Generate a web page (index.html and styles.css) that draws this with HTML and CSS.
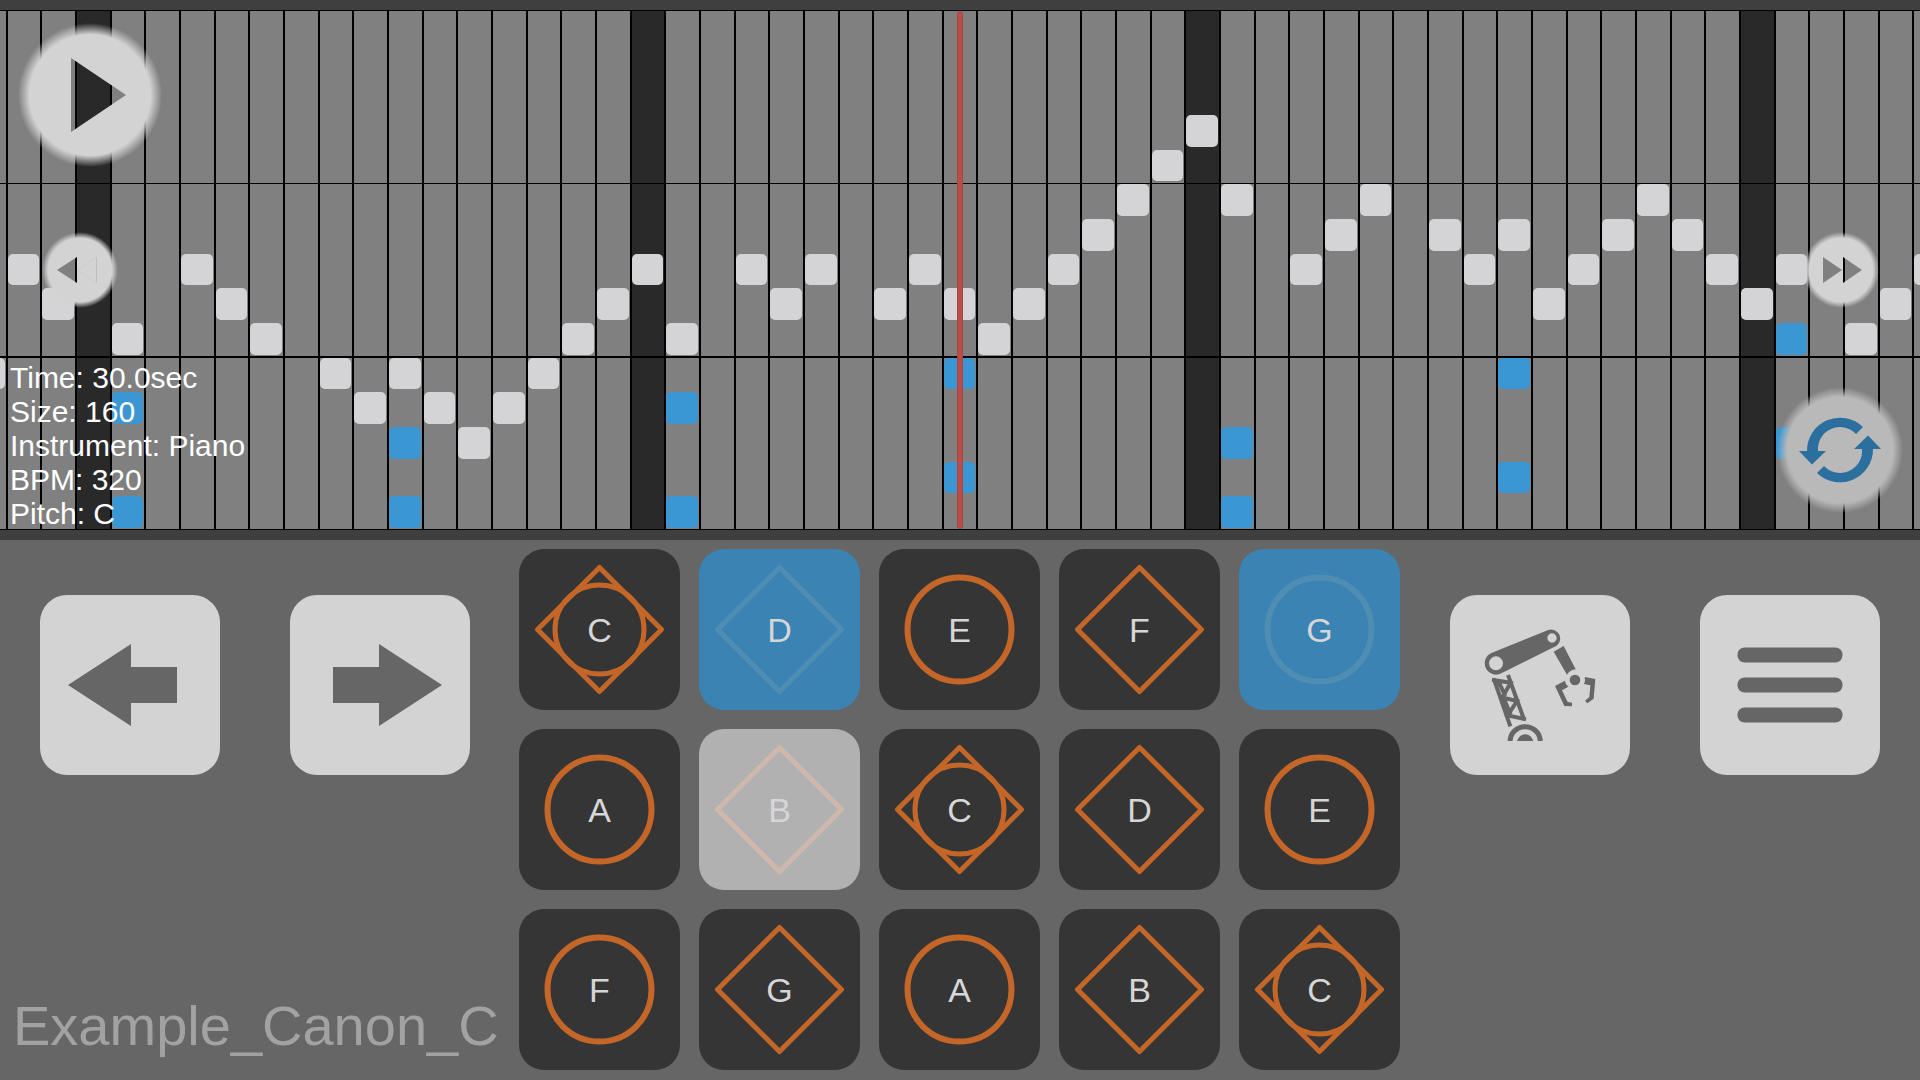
FILE: index.html
```html
<!DOCTYPE html>
<html lang="en">
<head>
<meta charset="utf-8">
<meta name="viewport" content="width=device-width, initial-scale=1">
<title>Example_Canon_C</title>
<link rel="stylesheet" href="styles.css">
</head>
<body>
<svg class="defs" aria-hidden="true">
  <defs>
    <radialGradient id="soft-light">
      <stop offset="0.84" stop-color="#d3d3d3"/>
      <stop offset="1" stop-color="#d3d3d3" stop-opacity="0"/>
    </radialGradient>
    <radialGradient id="soft-gray">
      <stop offset="0.84" stop-color="#b9b9b9"/>
      <stop offset="1" stop-color="#b9b9b9" stop-opacity="0"/>
    </radialGradient>
    <symbol id="circle" viewBox="0 0 161 161"><circle cx="80.5" cy="80.5" r="52" stroke-width="6"/></symbol>
    <symbol id="diamond" viewBox="0 0 161 161"><path d="M80.5 18.5L142.5 80.5 80.5 142.5 18.5 80.5Z"/></symbol>
    <symbol id="both" viewBox="0 0 161 161"><path d="M80.5 18.5L142.5 80.5 80.5 142.5 18.5 80.5Z"/><circle cx="80.5" cy="80.5" r="44.5"/></symbol>
  </defs>
</svg>

<section class="roll" aria-label="Score">
  <div class="roll-grid" id="roll-grid"></div>
  <div class="playhead"></div>
  <ul class="info">
    <li>Time: 30.0sec</li>
    <li>Size: 160</li>
    <li>Instrument: Piano</li>
    <li>BPM: 320</li>
    <li>Pitch: C</li>
  </ul>
  <button class="round play" type="button" aria-label="Play">
    <svg viewBox="0 0 144 144"><path fill="url(#soft-light)" fill-rule="evenodd" d="M0 72A72 72 0 0 1 144 72A72 72 0 0 1 0 72ZM53 35V109L108 72Z"/></svg>
  </button>
  <button class="round rewind" type="button" aria-label="Rewind">
    <svg viewBox="0 0 76 76"><path fill="url(#soft-light)" fill-rule="evenodd" d="M0 38A38 38 0 0 1 76 38A38 38 0 0 1 0 38ZM15 38L35 25V51Z"/><path fill="none" stroke="#cdcdcd" d="M36 38L54 25.5M36 38L54 51"/><path fill="none" stroke="#bebebe" d="M54.5 25V51"/></svg>
  </button>
  <button class="round forward" type="button" aria-label="Fast forward">
    <svg viewBox="0 0 76 76"><path fill="url(#soft-light)" fill-rule="evenodd" d="M0 38A38 38 0 0 1 76 38A38 38 0 0 1 0 38ZM20 25V51L39 38ZM40 25V51L59 38Z"/></svg>
  </button>
  <button class="round loop" type="button" aria-label="Loop">
    <svg viewBox="-63 -63 126 126"><circle r="63" fill="url(#soft-gray)"/><path fill="#2a6f9e" d="M-33 1A33 33 0 0 1 23 -23L16 -16A22 22 0 0 0 -22 1H-14L-28 14.5-41 1ZM33 -1A33 33 0 0 1 -23 23L-16 16A22 22 0 0 0 22 -1H14L28 -14.5 41 -1Z"/></svg>
  </button>
</section>

<main class="panel">
  <div class="side">
    <div class="tools">
      <button class="tool" type="button" aria-label="Step back"><svg viewBox="0 0 180 180"><path d="M28 90L91 49V72H137V108H91V131Z"/></svg></button>
      <button class="tool" type="button" aria-label="Step forward"><svg viewBox="0 0 180 180"><path d="M152 90L89 49V72H43V108H89V131Z"/></svg></button>
    </div>
    <h1 class="title">Example_Canon_C</h1>
  </div>

  <div class="pads">
    <button class="pad" type="button"><svg><use href="#both"/></svg><span>C</span></button>
    <button class="pad active" type="button"><svg><use href="#diamond"/></svg><span>D</span></button>
    <button class="pad" type="button"><svg><use href="#circle"/></svg><span>E</span></button>
    <button class="pad" type="button"><svg><use href="#diamond"/></svg><span>F</span></button>
    <button class="pad active" type="button"><svg><use href="#circle"/></svg><span>G</span></button>
    <button class="pad" type="button"><svg><use href="#circle"/></svg><span>A</span></button>
    <button class="pad lit" type="button"><svg><use href="#diamond"/></svg><span>B</span></button>
    <button class="pad" type="button"><svg><use href="#both"/></svg><span>C</span></button>
    <button class="pad" type="button"><svg><use href="#diamond"/></svg><span>D</span></button>
    <button class="pad" type="button"><svg><use href="#circle"/></svg><span>E</span></button>
    <button class="pad" type="button"><svg><use href="#circle"/></svg><span>F</span></button>
    <button class="pad" type="button"><svg><use href="#diamond"/></svg><span>G</span></button>
    <button class="pad" type="button"><svg><use href="#circle"/></svg><span>A</span></button>
    <button class="pad" type="button"><svg><use href="#diamond"/></svg><span>B</span></button>
    <button class="pad" type="button"><svg><use href="#both"/></svg><span>C</span></button>
  </div>

  <div class="side">
    <div class="tools end">
      <button class="tool" type="button" aria-label="Auto play">
        <svg viewBox="30 45 540 540">
          <path fill-rule="evenodd" d="M154 219L325 150A27 27 0 0 1 350 197L184 280A34 34 0 1 1 154 219ZM147 250A21 21 0 0 0 189 250A21 21 0 0 0 147 250ZM322 174A14 14 0 0 0 350 174A14 14 0 0 0 322 174Z"/>
          <path d="M341 215L371 198 407 268Q389 270 381 284Z"/>
          <circle cx="405" cy="300" r="16"/>
          <path d="M345 318L375 302Q376 314 385 320L366 331 383 366 396 368V379L373 378Z"/>
          <path d="M434 291L466 297 461 356 442 370 435 362 448 351 451 316 432 312Q437 302 434 291Z"/>
          <path class="truss" d="M161 295L211 439M204 285L253 421M156 299L212 308 187 352 231 363 203 406 258 418M176 305L196 348M190 352L212 404"/>
          <path d="M203 483A52 50 0 0 1 308 483H293A37 35 0 0 0 218 483ZM231 483Q238 464 256 463 273 464 280 483Z"/>
        </svg>
      </button>
      <button class="tool" type="button" aria-label="Menu"><svg viewBox="0 0 180 180"><rect x="37.5" y="52.5" width="105" height="15" rx="7"/><rect x="37.5" y="82.5" width="105" height="15" rx="7"/><rect x="37.5" y="112.5" width="105" height="15" rx="7"/></svg></button>
    </div>
  </div>
</main>
<script src="roll.js"></script>
</body>
</html>
```
FILE: styles.css
```css
* {
  box-sizing: border-box;
}

body {
  margin: 0;
  min-height: 100vh;
  display: flex;
  flex-direction: column;
  overflow-x: hidden;
  background: #666;
  font-family: "Liberation Sans", Arial, sans-serif;
}

button {
  padding: 0;
  border: 0;
  background: none;
  font: inherit;
  cursor: pointer;
}

button svg {
  display: block;
  width: 100%;
  height: 100%;
}

.defs {
  position: absolute;
  width: 0;
  height: 0;
}

/* Score */

.roll {
  position: relative;
  overflow: hidden;
  padding: 10px 0;
  background: #3f3f3f;
}

.roll-grid {
  display: grid;
  grid-template-columns: repeat(57, minmax(0, 1fr));
  grid-template-rows: repeat(15, minmax(0, 1fr));
  height: 520px;
  margin: 0 -28px;
  background: #808080;
}

.column {
  margin-left: -1px;
  margin-right: -1px;
  border: solid #000;
  border-width: 1px 2px;
}

.column.bar {
  background: #292929;
}

.octave {
  border-top: 1px solid #000;
}

.octave.base {
  margin-top: -1px;
  border-top-width: 2px;
}

.note {
  margin: 1px 2px 2px 1px;
  border-radius: 5px;
  background: #d4d4d6;
}

.note.bass {
  background: #3b97d3;
}

.playhead {
  position: absolute;
  top: 11px;
  bottom: 11px;
  left: calc(50% - 3px);
  width: 6px;
  border: 1px solid #a34542;
  border-radius: 3px;
  background: #bd4b48;
}

.info {
  position: absolute;
  left: 10px;
  bottom: 9px;
  margin: 0;
  padding: 0;
  list-style: none;
  color: #fff;
  font-size: 30px;
  line-height: 34px;
}

.round {
  position: absolute;
  border-radius: 50%;
}

.play {
  top: 23px;
  left: 18px;
  width: 144px;
  height: 144px;
}

.rewind,
.forward {
  top: 232px;
  width: 76px;
  height: 76px;
}

.rewind {
  left: 42px;
}

.forward {
  right: 41px;
}

.loop {
  top: 387px;
  right: 17px;
  width: 126px;
  height: 126px;
}

/* Controls */

.panel {
  flex: 1;
  display: grid;
  grid-template-columns: minmax(0, 1fr) 882px minmax(0, 1fr);
  padding: 9px 0 10px;
}

.side {
  display: flex;
  flex-direction: column;
  justify-content: space-between;
}

.tools {
  display: flex;
  gap: 70px;
  padding: 46px 40px 0;
}

.tools.end {
  justify-content: flex-end;
}

.tool {
  flex: none;
  width: 180px;
  height: 180px;
  border-radius: 27px;
  background: #d3d3d3;
  fill: #666;
}

.truss {
  fill: none;
  stroke: #666;
  stroke-width: 12;
}

.title {
  margin: 0 0 8px 13px;
  color: #a2a2a2;
  font-size: 56px;
  font-weight: 400;
  line-height: 72px;
}

.pads {
  display: grid;
  grid-template-columns: repeat(5, 161px);
  grid-auto-rows: 161px;
  gap: 19px;
}

.pad {
  display: grid;
  place-items: center;
  border-radius: 25px;
  background: #353535;
  color: #d6d6d8;
  font-size: 34px;
  line-height: 40px;
}

.pad svg,
.pad span {
  grid-area: 1 / 1;
}

.pad svg {
  fill: none;
  stroke: #c46628;
  stroke-width: 5;
  stroke-linejoin: round;
}

.pad.active {
  background: #3a83b3;
}

.pad.active svg {
  stroke: #508db3;
}

.pad.lit {
  background: #b1b1b1;
}

.pad.lit svg {
  stroke: #cfb8ab;
}
```
FILE: roll.js
```javascript
const COLUMNS = 57;
const BAR_COLUMNS = [4, 20, 36, 52];
const OCTAVE_ROWS = [6, 11];

// Row of the melody note in each column, counted from the top; 0 is a rest.
const melody = [
  11, 8, 9, 0, 10, 0, 8, 9, 10, 0, 11, 12, 11, 12, 13, 12, 11, 10, 9,
  8, 10, 0, 8, 9, 8, 0, 9, 8, 9, 10, 9, 8, 7, 6, 5, 4, 6, 0,
  8, 7, 6, 0, 7, 8, 7, 9, 8, 7, 6, 7, 8, 9, 8, 0, 10, 9, 8
];

// [column, row] of the accompaniment notes.
const bass = [
  [5, 12], [5, 15], [13, 13], [13, 15], [21, 12], [21, 15], [29, 11],
  [29, 14], [37, 13], [37, 15], [45, 11], [45, 14], [53, 10], [53, 13]
];

const grid = document.getElementById("roll-grid");

function add(className, area) {
  const item = document.createElement("div");
  item.className = className;
  item.style.gridArea = area;
  grid.append(item);
}

for (let column = 1; column <= COLUMNS; column++) {
  const bar = BAR_COLUMNS.includes(column) ? " bar" : "";
  add("column" + bar, `1 / ${column} / -1 / ${column + 1}`);
}

OCTAVE_ROWS.forEach((row, index) => {
  add(index ? "octave base" : "octave", `${row} / 1 / ${row + 1} / -1`);
});

melody.forEach((row, index) => {
  if (row) add("note", `${row} / ${index + 1}`);
});

bass.forEach(([column, row]) => add("note bass", `${row} / ${column}`));
```
